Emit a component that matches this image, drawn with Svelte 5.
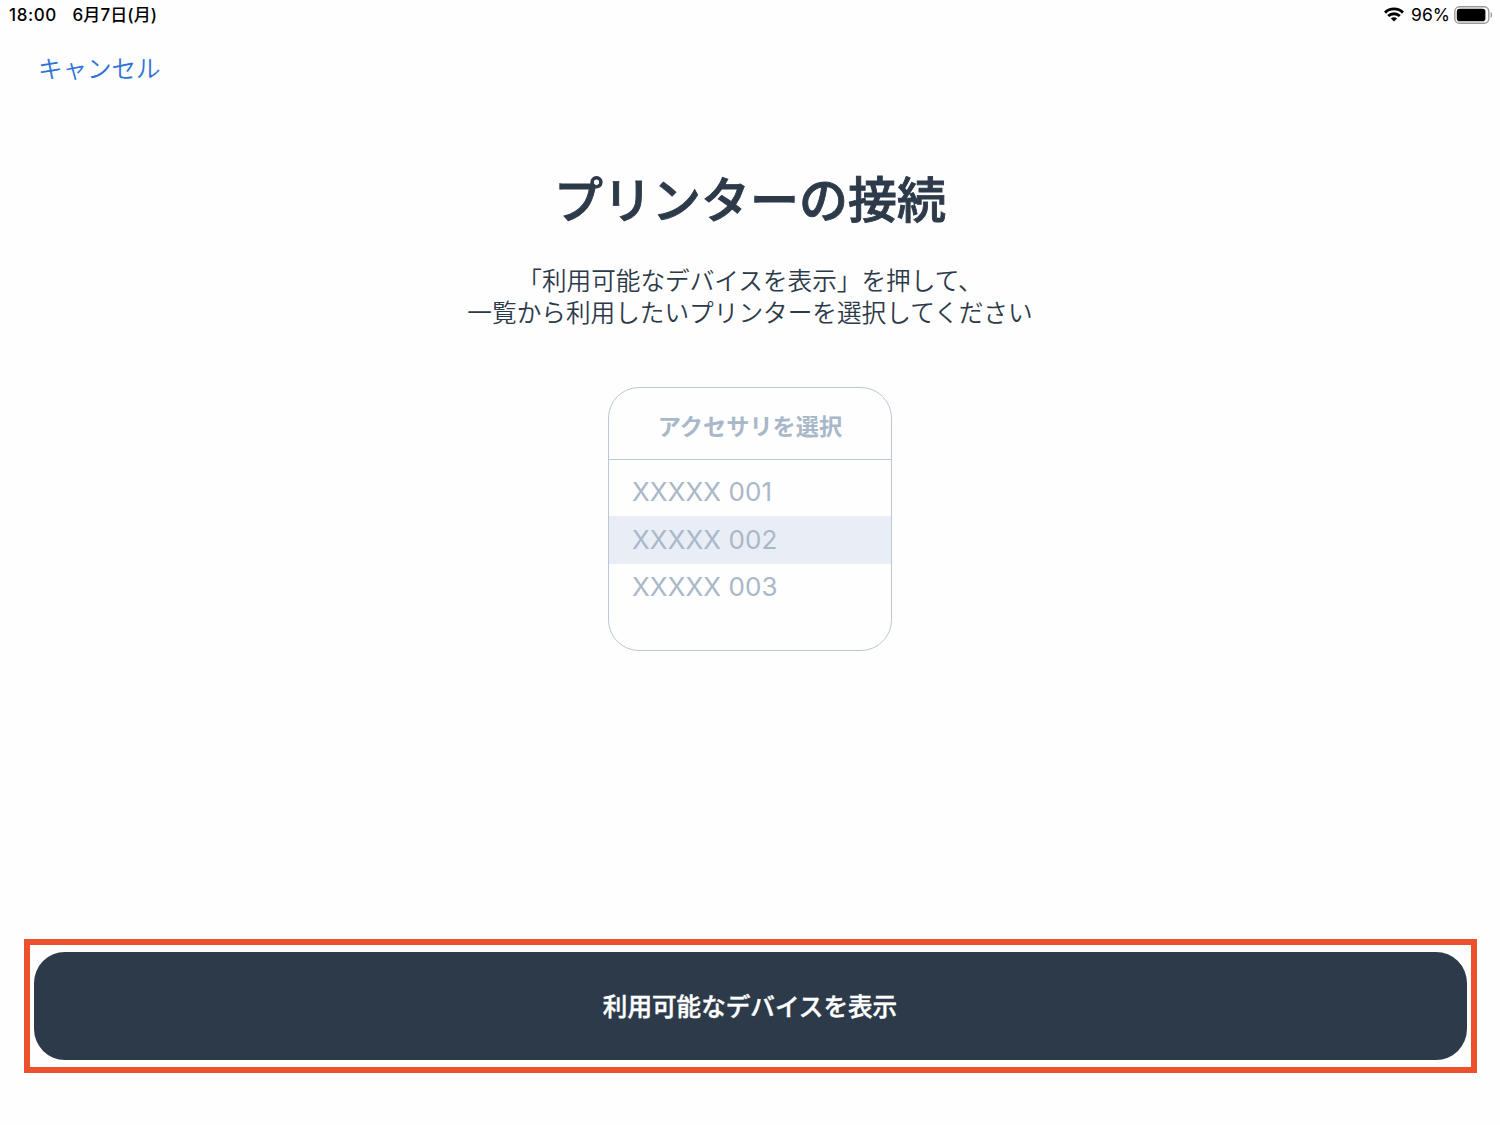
<script>
  let time    = $state('18:00');
  let date    = $state('6月7日(月)');
  let battery = $state(96);

  let accessories = $state(['XXXXX 001', 'XXXXX 002', 'XXXXX 003']);
  let selected    = $state(1);
</script>

<div class="screen">
  <header class="status">
    <span class="time">{time}</span>
    <span class="date">{date}</span>
    <div class="indicators">
      <svg class="wifi" viewBox="0 0 20 15" width="20" height="15">
        <g fill="none" stroke="#000" stroke-width="2.9">
          <path d="M1 5.6 C6 0.6 14 0.6 19 5.6" />
          <path d="M4.2 9 C7.5 5.9 12.5 5.9 15.8 9" />
        </g>
        <path d="M10 14.6 L6.9 11.5 C8.6 9.8 11.4 9.8 13.1 11.5 Z" />
      </svg>
      <span class="percent">{battery}%</span>
      <svg class="battery" viewBox="0 0 39 18" width="39" height="18">
        <rect x="0.8" y="0.8" width="34" height="16.4" rx="4.6" fill="none" stroke="#999" stroke-width="1.4" />
        <rect x="2.8" y="2.8" width="28.6" height="12.4" rx="2.8" />
        <path d="M36.6 6 C38.6 6.6 38.6 11.4 36.6 12 Z" fill="#999" />
      </svg>
    </div>
  </header>

  <nav>
    <button class="cancel">キャンセル</button>
  </nav>

  <main>
    <h1>プリンターの接続</h1>
    <p class="lead">
      「利用可能なデバイスを表示」を押して、<br />
      一覧から利用したいプリンターを選択してください
    </p>

    <div class="picker">
      <div class="picker-head">アクセサリを選択</div>
      <ul>
        {#each accessories as name, i}
          <li class:active={i === selected}>{name}</li>
        {/each}
      </ul>
    </div>
  </main>

  <footer>
    <div class="highlight">
      <button class="show-btn">利用可能なデバイスを表示</button>
    </div>
  </footer>
</div>

<style>
  :global(body) { margin: 0; background: #fefefe; }

  .screen {
    box-sizing: border-box;
    height: 1125px;
    display: flex;
    flex-direction: column;
    overflow: hidden;
    color: #2d3a4a;
    font-family: Inter, "Noto Sans CJK JP", sans-serif;
  }
  button {
    border: 0;
    padding: 0;
    background: none;
    font-family: inherit;
  }

  .status {
    display: flex;
    align-items: center;
    height: 29px;
    padding: 0 7px 0 9px;
    color: #000;
    font-size: 17px;
    font-weight: 500;
    line-height: 29px;
  }
  .time, .date { padding-top: 1px; }
  .time { width: 63.5px; letter-spacing: 0.6px; }
  .date { letter-spacing: 0.1px; }
  .indicators { display: flex; align-items: center; margin-left: auto; }
  .percent { margin: 0 4px 0 7px; font-size: 17.5px; font-weight: 400; }

  nav { height: 77px; padding: 0 38px; display: flex; align-items: center; }
  .cancel { color: #2f73d9; font-size: 24.5px; font-weight: 350; }

  main {
    flex: 1;
    display: flex;
    flex-direction: column;
    align-items: center;
  }
  h1 {
    margin: 60px 0 0;
    font-size: 49px;
    font-weight: 500;
    line-height: 70px;
    -webkit-text-stroke: 0.9px currentColor;
  }
  .lead {
    margin: 30px 0 0;
    font-size: 24.65px;
    font-weight: 350;
    line-height: 31.5px;
    text-align: center;
  }

  .picker {
    box-sizing: border-box;
    width: 284px;
    height: 264px;
    margin-top: 58px;
    border: 1.5px solid #b9c8d8;
    border-radius: 31px;
    overflow: hidden;
    color: #a9b8c9;
  }
  .picker-head {
    height: 71px;
    border-bottom: 1.5px solid #b9c8d8;
    font-size: 23.2px;
    font-weight: 600;
    line-height: 78px;
    text-align: center;
  }
  ul { margin: 0; padding: 8px 0 0; list-style: none; }
  li {
    height: 48px;
    padding-left: 23px;
    font-size: 26px;
    line-height: 48px;
    letter-spacing: 0.1px;
  }
  li:last-child { line-height: 46px; }
  .active { background: #e9edf5; }

  footer { padding: 0 23.5px 52px; }
  .highlight {
    padding: 7px 4px;
    border: 6px solid #ec512b;
  }
  .show-btn {
    display: block;
    width: 100%;
    height: 108px;
    padding-bottom: 2px;
    border-radius: 31px;
    background: #2d3a4a;
    color: #fff;
    font-size: 24.6px;
    font-weight: 500;
    -webkit-text-stroke: 0.4px currentColor;
  }
</style>
